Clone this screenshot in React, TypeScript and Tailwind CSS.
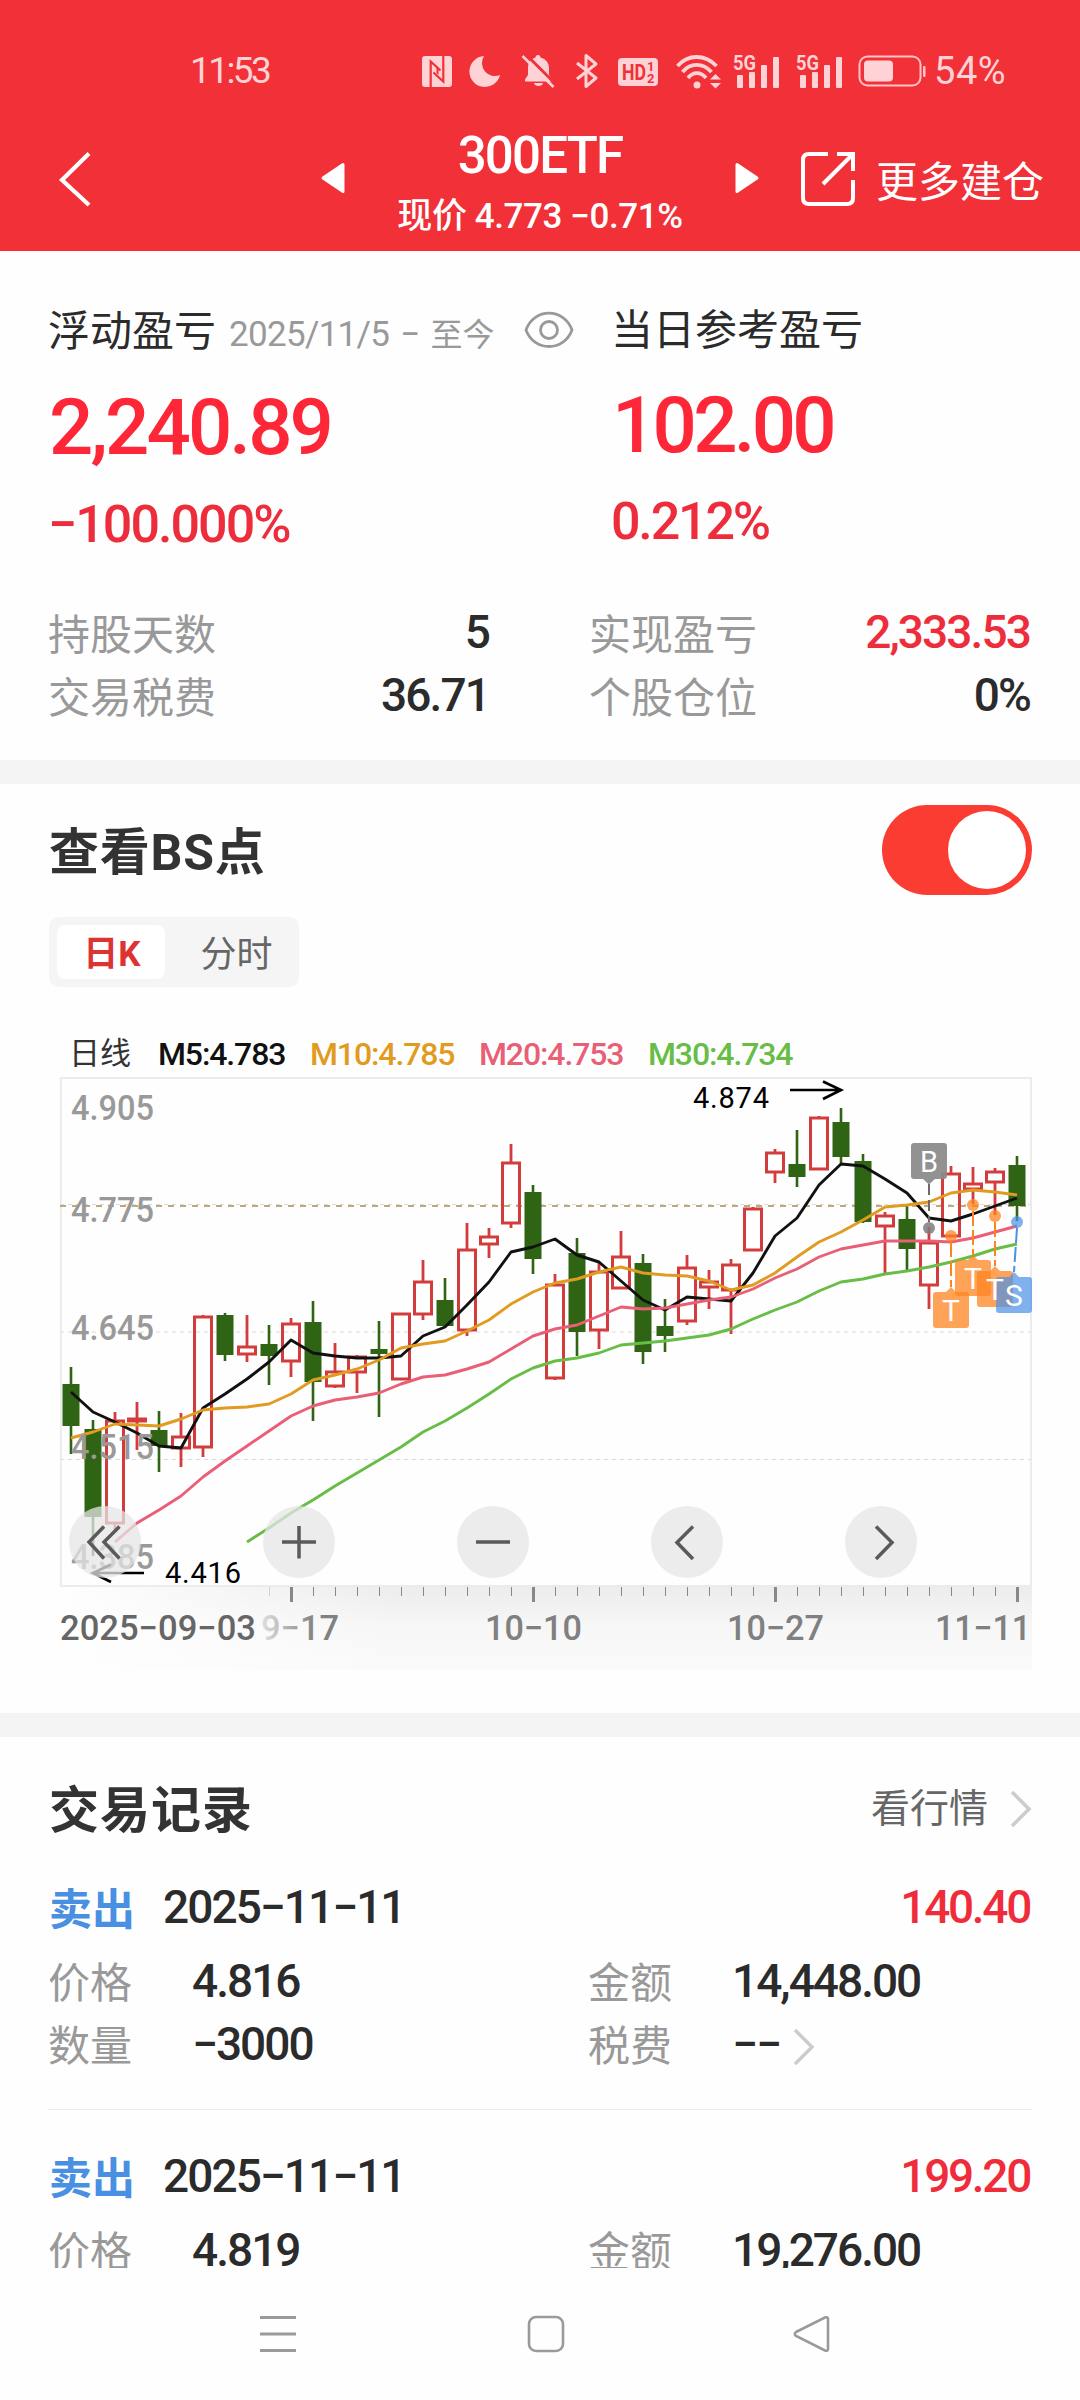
import { ReactNode } from "react"

type Candle = [high: number, top: number, bottom: number, low: number, up: boolean]

const candles: Candle[] = [
  [307, 324, 366, 394, false],
  [360, 369, 457, 496, false],
  [352, 361, 463, 472, true],
  [342, 359, 361, 390, true],
  [351, 370, 386, 412, false],
  [353, 377, 388, 407, true],
  [255, 257, 387, 397, true],
  [253, 255, 295, 301, false],
  [255, 287, 294, 302, true],
  [265, 284, 296, 325, false],
  [258, 264, 301, 317, true],
  [241, 262, 322, 361, false],
  [283, 312, 326, 328, true],
  [295, 297, 312, 333, true],
  [261, 289, 294, 357, false],
  [253, 254, 319, 320, true],
  [200, 222, 254, 260, true],
  [218, 240, 266, 267, false],
  [163, 190, 270, 276, true],
  [168, 177, 184, 198, true],
  [84, 103, 163, 168, true],
  [125, 132, 199, 214, false],
  [214, 225, 318, 320, true],
  [178, 193, 272, 296, false],
  [202, 212, 270, 289, true],
  [171, 197, 228, 229, true],
  [194, 203, 292, 304, false],
  [239, 266, 276, 292, false],
  [195, 208, 261, 265, true],
  [210, 222, 227, 249, true],
  [199, 205, 230, 274, true],
  [147, 149, 190, 191, true],
  [89, 93, 112, 123, true],
  [70, 104, 117, 127, false],
  [56, 58, 109, 110, true],
  [48, 62, 97, 103, false],
  [94, 101, 162, 163, false],
  [152, 156, 166, 214, true],
  [146, 159, 189, 210, false],
  [167, 183, 225, 249, true],
  [106, 114, 176, 177, true],
  [107, 124, 129, 144, true],
  [108, 112, 122, 155, true],
  [96, 105, 146, 161, false],
]

const ma5 = [332, 352, 362, 373, 386, 388, 348, 334, 319, 302, 280, 293, 296, 298, 298, 296, 276, 267, 245, 222, 192, 187, 179, 195, 202, 221, 240, 250, 237, 239, 241, 213, 176, 158, 125, 104, 106, 119, 133, 158, 161, 154, 146, 138]
const ma10 = [378, 372, 364, 365, 366, 359, 350, 348, 347, 344, 334, 320, 315, 309, 300, 288, 284, 281, 271, 260, 244, 232, 223, 219, 212, 207, 213, 215, 216, 221, 230, 225, 213, 197, 182, 172, 160, 147, 145, 142, 133, 130, 132, 135]
const ma20 = [482, 463, 450, 436, 417, 401, 386, 371, 356, 346, 340, 337, 333, 324, 317, 315, 309, 302, 289, 276, 269, 265, 256, 247, 249, 248, 244, 240, 237, 229, 218, 209, 197, 189, 185, 181, 181, 181, 182, 178, 172, 166]
const ma30 = [482, 468, 453, 440, 426, 413, 400, 387, 372, 361, 348, 334, 319, 308, 301, 298, 293, 285, 283, 281, 278, 275, 269, 259, 250, 242, 231, 222, 219, 214, 211, 207, 202, 196, 189, 184]

const cx = (i: number) => 71 + i * 22

// lines end on the last candle, shorter ones start later
const line = (ys: number[]) =>
  ys.map((y, i) => `${cx(i + candles.length - ys.length)},${y}`).join(" ")

const priceLabels = [
  { y: 60, text: "4.905" },
  { y: 162, text: "4.775" },
  { y: 280, text: "4.645" },
  { y: 399, text: "4.515" },
  { y: 509, text: "4.385" },
]

const legend = [
  { text: "M5:4.783", color: "text-[#111111]", width: "w-[152px]" },
  { text: "M10:4.785", color: "text-[#e19b20]", width: "w-[169px]" },
  { text: "M20:4.753", color: "text-[#e95f76]", width: "w-[169px]" },
  { text: "M30:4.734", color: "text-[#67bd45]", width: "w-[169px]" },
]

const markers = [
  { x: 951, dotY: 176, boxX: 933, boxY: 232, letter: "T", color: "#ff8420", opacity: 0.75 },
  { x: 973, dotY: 145, boxX: 955, boxY: 200, letter: "T", color: "#ff8420", opacity: 0.75 },
  { x: 995, dotY: 156, boxX: 977, boxY: 211, letter: "T", color: "#ff8420", opacity: 0.75 },
  { x: 1017, dotY: 162, boxX: 996, boxY: 217, letter: "S", color: "#4a90e8", opacity: 0.7 },
]

const records = [
  { date: "2025−11−11", profit: "140.40", price: "4.816", amount: "14,448.00", count: "−3000" },
  { date: "2025−11−11", profit: "199.20", price: "4.819", amount: "19,276.00", count: "−4000" },
]

function Signal() {
  return (
    <svg width="48" height="44" viewBox="0 -4 48 44" fill="#ffd3d5">
      <text x="0" y="17" fontSize="20" fontWeight="700" textLength="23" lengthAdjust="spacingAndGlyphs">5G</text>
      <rect x="4" y="22" width="6" height="13" rx="1" />
      <rect x="16" y="19" width="6" height="16" rx="1" />
      <rect x="28" y="12" width="6" height="23" rx="1" />
      <rect x="40" y="4" width="6" height="31" rx="1" />
    </svg>
  )
}

function StatusBar() {
  return (
    <div className="flex h-12 items-center text-[37px] leading-[48px] text-[#ffd3d5]">
      <span className="ml-[190px] w-[231px] tracking-[-0.07em]">11:53</span>

      {/* NFC */}
      <svg width="32" height="32" viewBox="0 0 32 32">
        <rect x="1" y="1" width="30" height="31" rx="3" fill="#ffd3d5" />
        <path d="M9.700 32 V6.500 L19.500 15.500 M22.300 1 V26.500 L12.500 17.500" fill="none" stroke="#f13037" strokeWidth="2.200" />
        <path d="M15.500 12 V18 L17.500 20 V14 Z" fill="#f13037" />
      </svg>

      {/* do not disturb */}
      <svg className="ml-4" width="32" height="32" viewBox="0 0 32 32">
        <path d="M15 1 A15.500 15.500 0 1 0 31 20 A13 13 0 0 1 15 1 Z" fill="#ffd3d5" />
      </svg>

      {/* muted bell */}
      <svg className="ml-5" width="34" height="36" viewBox="0 0 34 36">
        <path d="M17 2 C18.500 2 19.500 3 19.500 4.500 C25 6 28 10 28 15 V22 L31 26.500 V28.500 H4 V26.500 L7 22 V15 C7 10 9.500 6 14.500 4.500 C14.500 3 15.500 2 17 2 Z" fill="#ffd3d5" />
        <path d="M13 30 H22 C21.500 34 13.500 34 13 30 Z" fill="#ffd3d5" />
        <path d="M3.500 0 L35.500 32" stroke="#f13037" strokeWidth="3" />
        <path d="M1.500 3 L32.500 34" stroke="#ffd3d5" strokeWidth="2.600" />
      </svg>

      {/* bluetooth */}
      <svg className="ml-5" width="24" height="36" viewBox="0 0 24 36">
        <path d="M2 10 L21 25 L11 33.500 V2.500 L21 11 L2 26" fill="none" stroke="#ffd3d5" strokeWidth="3" strokeLinejoin="round" />
      </svg>

      <svg className="ml-[18px]" width="42" height="32" viewBox="0 0 42 32">
        <rect x="1" y="3" width="40" height="28" rx="4" fill="#ffd3d5" />
        <g fill="#f13037" fontWeight="700">
          <text x="5" y="25" fontSize="22" textLength="24" lengthAdjust="spacingAndGlyphs">HD</text>
          <text x="30" y="16" fontSize="13">1</text>
          <text x="30" y="28" fontSize="13">2</text>
        </g>
      </svg>

      {/* wifi */}
      <svg className="ml-[17px]" width="46" height="36" viewBox="0 0 46 36">
        <g fill="none" stroke="#ffd3d5" strokeWidth="3.800">
          <path d="M1.500 13 C12 1 29 1 40.500 13" />
          <path d="M6.500 19 C14 9.500 27 9.500 35.500 19" />
          <path d="M12 25 C17 18.500 25 18.500 30 25" />
        </g>
        <circle cx="21" cy="32" r="3.500" fill="#ffd3d5" />
        <path d="M34 26.500 L39.500 21 L45 26.500 Z M34 30 L39.500 35.500 L45 30 Z" fill="#ffd3d5" />
      </svg>

      <span className="ml-[11px]"><Signal /></span>
      <span className="ml-[15px]"><Signal /></span>

      {/* battery */}
      <svg className="ml-[14px]" width="68" height="34" viewBox="0 0 68 34">
        <rect x="1.500" y="2.500" width="61" height="29" rx="8" fill="none" stroke="#ffc4c7" strokeWidth="2" />
        <rect x="6" y="6.500" width="29" height="21" rx="4" fill="#ffd3d5" />
        <rect x="65" y="12" width="2.500" height="11" rx="1" fill="#ffc4c7" />
      </svg>
      <span className="ml-[8px] text-[38px] tracking-[0.015em]">54%</span>
    </div>
  )
}

function Header() {
  return (
    <header className="flex h-[251px] flex-col bg-[#f13037] pt-[47px] text-white">
      <StatusBar />
      <div className="flex items-start">
        <svg className="mt-[56px] ml-[58px]" width="33" height="56" viewBox="0 0 33 56">
          <path d="M31 2.500 L4 29 L31 54" fill="none" stroke="white" strokeWidth="4.200" />
        </svg>
        <svg className="mt-[67px] ml-[230px]" width="24" height="32" viewBox="0 0 24 32">
          <path d="M2 16 L22 2.500 V29.500 Z" fill="white" stroke="white" strokeWidth="3" strokeLinejoin="round" />
        </svg>
        <div className="mt-[31px] w-[390px] text-center font-medium">
          <h1 className="text-[51px] leading-[60px] tracking-[-0.035em]">300ETF</h1>
          <p className="text-[35px] leading-[62px] tracking-[-0.012em] whitespace-nowrap">现价 4.773 −0.71%</p>
        </div>
        <svg className="mt-[67px]" width="24" height="32" viewBox="0 0 24 32">
          <path d="M22 16 L2 2.500 V29.500 Z" fill="white" stroke="white" strokeWidth="3" strokeLinejoin="round" />
        </svg>
        <svg className="mt-[56px] ml-[41px]" width="56" height="56" viewBox="0 0 56 56" fill="none" stroke="white" strokeWidth="4">
          <path d="M28 3 H9 Q3 3 3 9 V47 Q3 53 9 53 H47 Q53 53 53 47 V29" />
          <path d="M23 33 L52 4 M37 3 H53 V20" />
        </svg>
        <span className="mt-[58px] ml-[20px] text-[42px] leading-[60px]">更多建仓</span>
      </div>
    </header>
  )
}

function Stat({ label, value, red = false }: { label: string; value: string; red?: boolean }) {
  return (
    <div className="flex h-[63px] items-center justify-between">
      <span className="text-[42px] text-[#999999]">{label}</span>
      <span className={`pr-[2px] pb-1.5 text-[46px] font-medium tracking-[-0.041em] ${red ? "text-[#ee2d3c]" : "text-[#2b2b2b]"}`}>{value}</span>
    </div>
  )
}

function Summary() {
  return (
    <section className="h-[509px] px-12 pt-[53px]">
      <div className="flex h-[300px]">
        <div className="w-[563px]">
          <div className="flex h-[54px] items-center">
            <span className="text-[42px] text-[#2b2b2b]">浮动盈亏</span>
            <span className="pt-2 pl-[13px] text-[35px] tracking-[-0.02em] whitespace-nowrap text-[#999999] [word-spacing:3px]">
              2025/11/5 − <span className="text-[32px] tracking-normal">至今</span>
            </span>
            <svg className="mr-[37px] ml-auto" width="50" height="40" viewBox="0 0 50 40" fill="none" stroke="#999999" strokeWidth="2.800">
              <path d="M2 19 C10 -3.500 40 -3.500 48 19 C40 41 10 41 2 19 Z" />
              <circle cx="25" cy="19" r="8.500" />
            </svg>
          </div>
          <div className="mt-[30px] pl-[1px] text-[78px] leading-[80px] font-medium tracking-[-0.037em] text-[#fd2737]">2,240.89</div>
          <div className="mt-[27px] text-[52px] leading-[60px] font-medium tracking-[-0.038em] text-[#ee2d3c]">−100.000%</div>
        </div>
        <div>
          <div className="h-[52px] text-[42px] leading-[54px] whitespace-nowrap text-[#2b2b2b]">当日参考盈亏</div>
          <div className="mt-[30px] pl-[1px] text-[78px] leading-[80px] font-medium tracking-[-0.048em] text-[#fd2737]">102.00</div>
          <div className="mt-[26px] text-[52px] leading-[60px] font-medium tracking-[-0.042em] text-[#ee2d3c]">0.212%</div>
        </div>
      </div>
      <div className="grid grid-cols-[443px_443px] justify-between">
        <Stat label="持股天数" value="5" />
        <Stat label="实现盈亏" value="2,333.53" red />
        <Stat label="交易税费" value="36.71" />
        <Stat label="个股仓位" value="0%" />
      </div>
    </section>
  )
}

type MarkerProps = (typeof markers)[number]

// trade marker hanging below its price point
function Marker({ x, dotY, boxX, boxY, color, opacity }: MarkerProps) {
  const mid = boxX + 18
  return (
    <g>
      <path d={`M${x} ${dotY + 6} L${mid} ${boxY - 5}`} stroke={color} strokeWidth="2" strokeDasharray="15 4" />
      <circle cx={x} cy={dotY} r="6" fill={color} opacity={opacity} />
      <path
        d={`M${boxX + 3} ${boxY} H${mid - 5} L${mid} ${boxY - 5} L${mid + 5} ${boxY} H${boxX + 33} Q${boxX + 36} ${boxY} ${boxX + 36} ${boxY + 3} V${boxY + 33} Q${boxX + 36} ${boxY + 36} ${boxX + 33} ${boxY + 36} H${boxX + 3} Q${boxX} ${boxY + 36} ${boxX} ${boxY + 33} V${boxY + 3} Q${boxX} ${boxY} ${boxX + 3} ${boxY} Z`}
        fill={color}
        opacity={opacity}
      />
    </g>
  )
}

function RoundButton({ x, children }: { x: number; children: ReactNode }) {
  return (
    <g transform={`translate(${x} 482)`}>
      <circle r="36" fill="#e6e6e6" opacity="0.75" />
      <g fill="none" stroke="#5a5a5a" strokeWidth="3.500">{children}</g>
    </g>
  )
}

function KLineChart() {
  return (
    <svg className="block" width="984" height="597" viewBox="48 14 984 597">
      <defs>
        <linearGradient id="axisDown" x1="0" y1="0" x2="0" y2="1">
          <stop offset="0" stopColor="#ececec" />
          <stop offset="0.500" stopColor="#f7f7f7" />
          <stop offset="1" stopColor="#fafafa" />
        </linearGradient>
        <linearGradient id="axisFade" x1="0" y1="0" x2="1" y2="0">
          <stop offset="0" stopColor="#fefefe" />
          <stop offset="0.350" stopColor="#fefefe" stopOpacity="0" />
        </linearGradient>
        <linearGradient id="dateFade" gradientUnits="userSpaceOnUse" x1="262" y1="0" x2="316" y2="0">
          <stop offset="0" stopColor="#dedede" />
          <stop offset="1" stopColor="#808080" />
        </linearGradient>
      </defs>

      {/* axis background */}
      <rect x="60" y="526" width="972" height="84" fill="url(#axisDown)" />
      <rect x="60" y="526" width="972" height="85" fill="url(#axisFade)" />

      {/* frame + grid */}
      <rect x="61" y="18" width="970" height="508" fill="none" stroke="#ececec" strokeWidth="2" />
      <g stroke="#dcdcdc" strokeWidth="1.200" strokeDasharray="4 4">
        <path d="M60 144.500 H1031" />
        <path d="M60 272 H1031" />
        <path d="M60 399.500 H1031" />
      </g>
      <path d="M60 146 H1031" stroke="#c0a87c" strokeWidth="2" strokeDasharray="6 6" />

      {candles.map(([high, top, bottom, low, up], i) =>
        up ? (
          <g key={i} stroke="#d33c3c">
            <path d={`M${cx(i)} ${high} V${top} M${cx(i)} ${bottom} V${low}`} strokeWidth="2.800" />
            <rect x={cx(i) - 8.500} y={top} width="17" height={bottom - top} fill="none" strokeWidth="3" />
          </g>
        ) : (
          <g key={i} fill="#2e6413">
            <rect x={cx(i) - 1.300} y={high} width="2.600" height={low - high} />
            <rect x={cx(i) - 8.500} y={top} width="17" height={bottom - top} />
          </g>
        )
      )}

      <g fill="none" strokeWidth="2.900" strokeLinejoin="round">
        <polyline points={line(ma5)} stroke="#111111" />
        <polyline points={line(ma10)} stroke="#e19b20" />
        <polyline points={line(ma20)} stroke="#e95f76" />
        <polyline points={line(ma30)} stroke="#67bd45" />
      </g>

      <g fill="#999999" fontSize="35" fontWeight="500">
        {priceLabels.map((p) => (
          <text key={p.text} x="71" y={p.y} textLength="83" lengthAdjust="spacingAndGlyphs">{p.text}</text>
        ))}
      </g>

      {/* highest / lowest price */}
      <g fill="none" stroke="black" strokeWidth="2.700">
        <path d="M790 30 H841 M823 21.500 L841 30 L823 39" />
        <path d="M144 513 H93 M111 504.500 L93 513 L111 522" />
      </g>
      <g fill="black" fontSize="29">
        <text x="693" y="48" textLength="76" lengthAdjust="spacing">4.874</text>
        <text x="165" y="523" textLength="76" lengthAdjust="spacing">4.416</text>
      </g>

      {/* buy marker */}
      <path d="M929 124 V162" stroke="#6b6b6b" strokeWidth="2" strokeDasharray="11 5" />
      <circle cx="929" cy="168" r="6" fill="#7d7d7d" opacity="0.850" />
      <path d="M914 83 H944 Q947 83 947 86 V116 Q947 119 944 119 H935 L929 124.500 L923 119 H914 Q911 119 911 116 V86 Q911 83 914 83 Z" fill="#8a8a8a" opacity="0.930" />
      <text x="929" y="112" fontSize="29" fill="white" textAnchor="middle">B</text>

      {markers.map((m) => (
        <Marker key={m.x} {...m} />
      ))}
      {markers.map((m) => (
        <text key={m.x} x={m.boxX + 18} y={m.boxY + 28.5} fontSize="30" fill="white" textAnchor="middle">{m.letter}</text>
      ))}

      {/* time axis */}
      {candles.map((_, i) => {
        if (i < 9) return null
        const major = (i - 10) % 11 === 0
        return (
          <path
            key={i}
            d={`M${cx(i) + 0.5} 527 V${major ? 542 : 536}`}
            stroke={i === 9 ? "#d0d0d0" : "#888888"}
            strokeWidth={major ? 3 : 1}
          />
        )
      })}
      <g fontSize="35" fontWeight="500" fill="#808080">
        <text x="60" y="580" fill="#666666" textLength="196" lengthAdjust="spacingAndGlyphs">2025−09−03</text>
        <text x="261" y="580" fill="url(#dateFade)" textLength="78" lengthAdjust="spacingAndGlyphs">9−17</text>
        <text x="485" y="580" textLength="97" lengthAdjust="spacingAndGlyphs">10−10</text>
        <text x="727" y="580" textLength="97" lengthAdjust="spacingAndGlyphs">10−27</text>
        <text x="935" y="580" textLength="96" lengthAdjust="spacingAndGlyphs">11−11</text>
      </g>

      <RoundButton x={105}>
        <path d="M-1 -15.500 L-16 0 L-1 16.500 M14.500 -15.500 L-1 0 L14.500 16.500" />
      </RoundButton>
      <RoundButton x={299}>
        <path d="M-17 0 H17 M0 -16 V16.500" />
      </RoundButton>
      <RoundButton x={493}>
        <path d="M-17 0 H17" />
      </RoundButton>
      <RoundButton x={687}>
        <path d="M6 -15.500 L-10 0.500 L6 17" />
      </RoundButton>
      <RoundButton x={881}>
        <path d="M-5 -15.500 L11 0.500 L-5 17" />
      </RoundButton>
    </svg>
  )
}

function ChartSection() {
  return (
    <section className="h-[929px] px-12 pt-[21px]">
      <div className="flex h-[90px] items-center justify-between">
        <h2 className="pt-1.5 pl-px text-[50px] font-bold tracking-[0.015em] text-[#333333]">查看BS点</h2>
        <div className="flex h-[90px] w-[150px] items-center justify-end rounded-full bg-[#fb3c32] pr-1.5">
          <div className="h-[78px] w-[78px] rounded-full bg-white" />
        </div>
      </div>

      <div className="mt-[22px] ml-px flex h-[70px] w-[250px] items-center rounded-[10px] bg-[#f5f5f5] pl-2 text-[36px]">
        <span className="h-[54px] w-[108px] rounded-lg bg-white pl-[2px] text-center text-[35px] leading-[59px] font-bold text-[#dc3434]">日K</span>
        <span className="flex-1 pt-1.5 pl-[9px] text-center text-[#666666]">分时</span>
      </div>

      <div className="mt-[47px] flex h-10 items-center pl-[21px] text-[32px] leading-10">
        <span className="w-[89px] text-[31px] text-[#333333]">日线</span>
        {legend.map((l) => (
          <span key={l.text} className={`shrink-0 font-medium tracking-[-0.035em] ${l.width} ${l.color}`}>{l.text}</span>
        ))}
      </div>
      <KLineChart />
    </section>
  )
}

function Chevron() {
  return (
    <svg width="22" height="38" viewBox="0 0 22 38">
      <path d="M2 2 L19 19 L2 36" fill="none" stroke="#cccccc" strokeWidth="3.500" />
    </svg>
  )
}

function Field({ label, children }: { label: string; children: ReactNode }) {
  return (
    <div className="flex h-[63px] items-center">
      <span className="w-[144px] pb-0.5 text-[42px] text-[#999999]">{label}</span>
      <span className="flex items-center pb-1.5 text-[46px] font-medium tracking-[-0.043em] text-[#2b2b2b]">{children}</span>
    </div>
  )
}

function Records() {
  return (
    <section className="h-[531px] overflow-hidden px-12 pt-11">
      <div className="flex h-[60px] items-center justify-between">
        <h2 className="pl-px text-[50px] font-bold tracking-[0.02em] text-[#333333]">交易记录</h2>
        <div className="flex items-center pb-1 text-[39px] text-[#666666]">
          看行情
          <span className="ml-[22px]"><Chevron /></span>
        </div>
      </div>

      {records.map((r) => (
        <div key={r.profit} className="border-b border-[#ececec] pt-[38px] pb-[30px]">
          <div className="flex h-[60px] items-center text-[46px] font-medium tracking-[-0.042em] text-[#2b2b2b]">
            <span className="w-[115px] pt-0.5 pl-px text-[43px] font-bold tracking-normal text-[#4a90e2]">卖出</span>
            <span className="pb-1">{r.date}</span>
            <span className="mr-[2px] ml-auto pb-1 tracking-[-0.05em] text-[#f02c3a]">{r.profit}</span>
          </div>
          <div className="mt-[14px] grid grid-cols-[540px_1fr]">
            <Field label="价格">{r.price}</Field>
            <Field label="金额">{r.amount}</Field>
            <Field label="数量">{r.count}</Field>
            <Field label="税费">
              −−
              <span className="pt-1 pl-[13px]"><Chevron /></span>
            </Field>
          </div>
        </div>
      ))}
    </section>
  )
}

function NavBar() {
  return (
    <nav className="flex h-[132px] items-center">
      <svg className="ml-[258px]" width="40" height="40" viewBox="0 0 40 40" stroke="#9a9a9a" strokeWidth="2.800">
        <path d="M2 3.500 H38 M2 20 H38 M2 36.500 H38" />
      </svg>
      <svg className="ml-[228px]" width="40" height="40" viewBox="0 0 40 40" fill="none" stroke="#9a9a9a" strokeWidth="2.600">
        <rect x="3" y="3" width="34" height="34" rx="7" />
      </svg>
      <svg className="ml-[226px]" width="40" height="40" viewBox="0 0 40 40" fill="none" stroke="#9a9a9a" strokeWidth="2.600">
        <path d="M4 18 L33 3.500 Q36 2.500 36 5 V35 Q36 37.500 33 36.500 L4 22 Q1.500 20 4 18 Z" />
      </svg>
    </nav>
  )
}

export default function App() {
  return (
    <div className="h-[2400px] w-[1080px] overflow-hidden bg-[#fefefe] font-[Roboto,'Noto_Sans_CJK_SC',sans-serif]">
      <Header />
      <Summary />
      <div className="h-6 bg-[#f4f4f4]" />
      <ChartSection />
      <div className="h-6 bg-[#f4f4f4]" />
      <Records />
      <NavBar />
    </div>
  )
}
